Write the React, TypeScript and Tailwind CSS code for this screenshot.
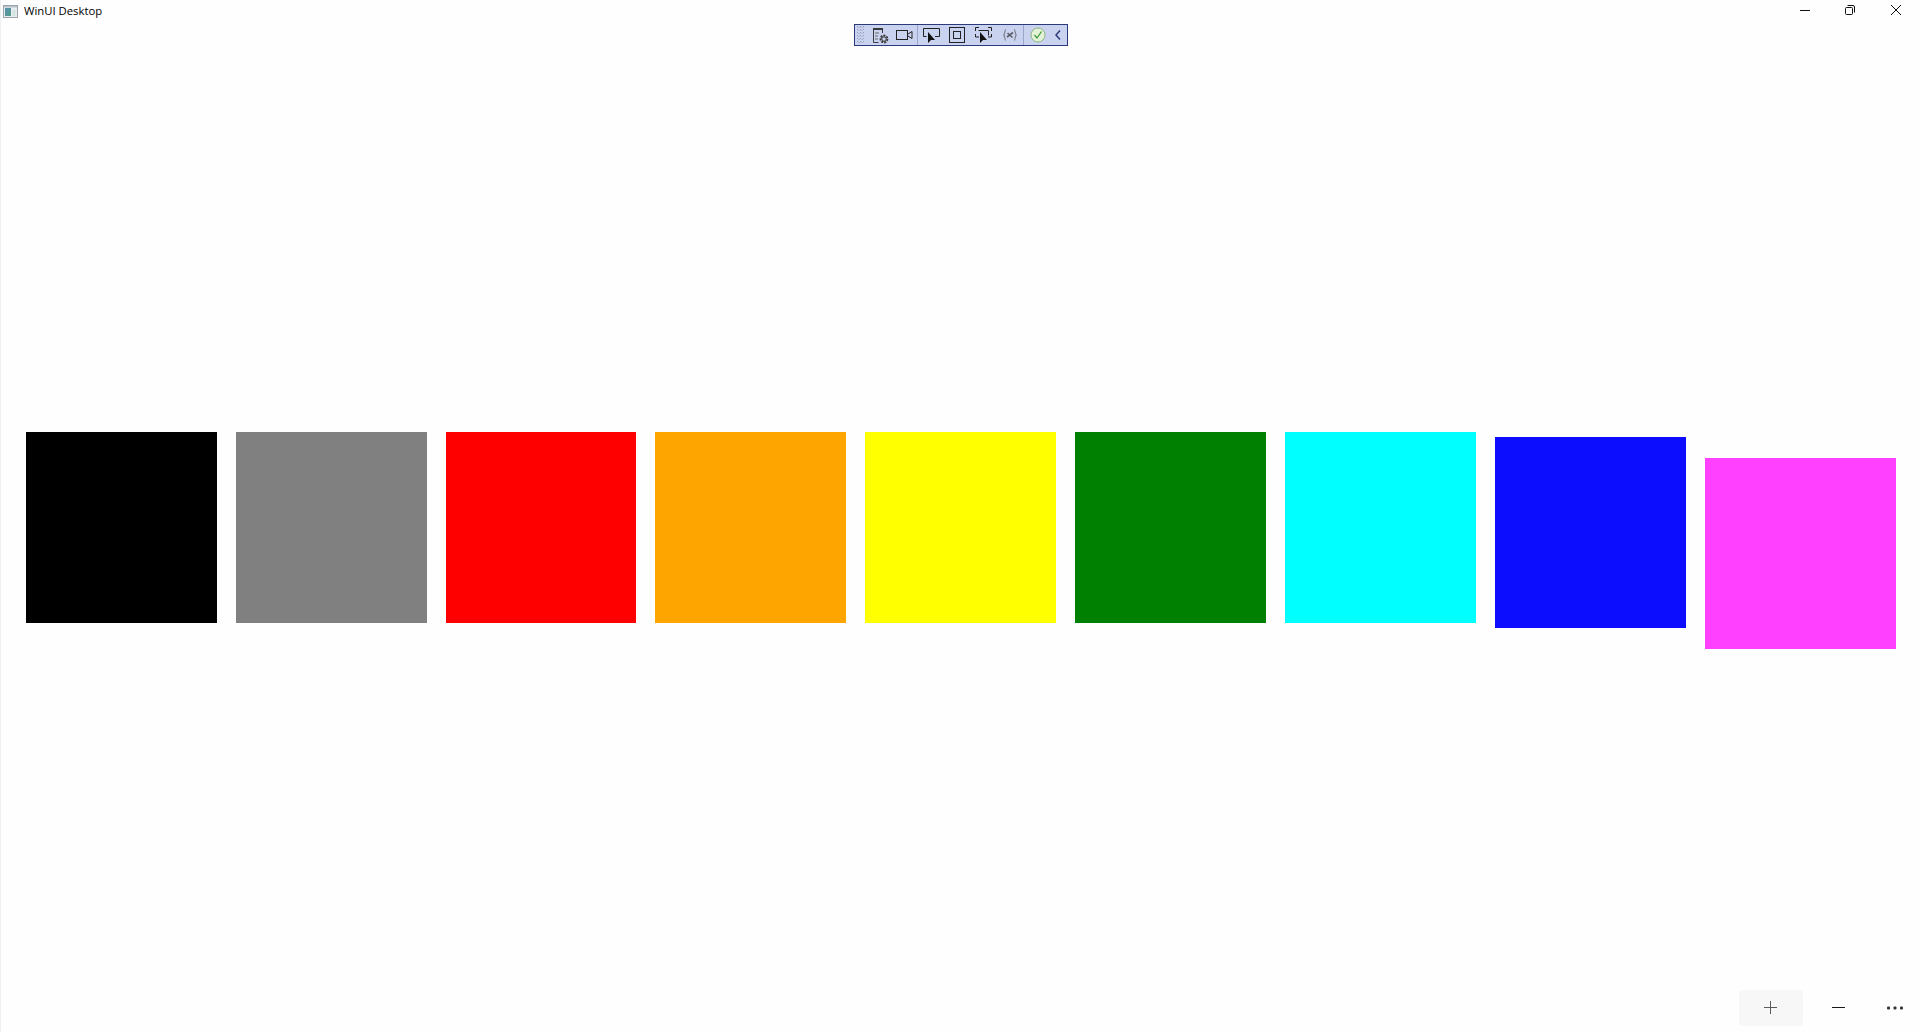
function TitleIcon() {
  return (
    <svg width="15" height="13" viewBox="0 0 15 13" className="ml-[2px] shrink-0">
      <defs>
        <linearGradient id="tg" x1="0" y1="0" x2="1" y2="1">
          <stop offset="0" stopColor="#5a8fb0" />
          <stop offset="1" stopColor="#4f9e86" />
        </linearGradient>
      </defs>
      <rect x="0.5" y="0.5" width="14" height="12" fill="#e8eef0" stroke="#9aa4ad" />
      <rect x="1" y="1" width="13" height="1.5" fill="#b9c3cc" />
      <rect x="2" y="3" width="6" height="8" fill="url(#tg)" />
      <rect x="9.5" y="5" width="3" height="6" fill="#cfe3dc" />
    </svg>
  );
}

function Toolbar() {
  return (
    <div className="absolute left-[853px] top-[24px] flex h-[22px] w-[214px] items-center border border-[#2c3a7c] bg-[#c9d2ee]">
      <svg width="7" height="18" viewBox="0 0 7 18" className="ml-[2px] shrink-0">
        {[1, 4, 7, 10, 13, 16].map((y) => (
          <g key={y} fill="#959db9">
            <rect x="0" y={y - 1} width="1" height="1" />
            <rect x="3" y={y - 1} width="1" height="1" />
            <rect x="6" y={y - 1} width="1" height="1" />
            <rect x="1.5" y={y} width="1" height="1" />
            <rect x="4.5" y={y} width="1" height="1" />
          </g>
        ))}
      </svg>
      <svg width="17" height="17" viewBox="0 0 17 17" className="ml-[8px] shrink-0">
        <rect x="1" y="1" width="10" height="2" fill="#3a3a3a" />
        <path d="M1.5 3v12.5h5M10.5 3v3" fill="none" stroke="#3a3a3a" />
        <path d="M3 6h4M3 9h3M3 12h3" stroke="#6a6a6a" />
        <circle cx="12" cy="12" r="3.4" fill="none" stroke="#3a3a3a" strokeWidth="2" strokeDasharray="2 1" />
        <circle cx="12" cy="12" r="2.2" fill="none" stroke="#3a3a3a" />
      </svg>
      <svg width="17" height="12" viewBox="0 0 17 12" className="ml-[7px] shrink-0">
        <rect x="0.5" y="1.5" width="11" height="9" fill="none" stroke="#222" />
        <path d="M12 5l4-2.5v7L12 7" fill="none" stroke="#222" />
      </svg>
      <div className="ml-[4px] h-[20px] w-px shrink-0 bg-[#9aa6cb]" />
      <svg width="17" height="17" viewBox="0 0 17 17" className="ml-[5px] shrink-0">
        <path d="M3.5 9.5H0.5V1.5H16.5V9.5H12" fill="none" stroke="#222" />
        <path d="M5 5l0 11 3-3 4 0z" fill="#111" />
      </svg>
      <svg width="16" height="16" viewBox="0 0 16 16" className="ml-[9px] shrink-0">
        <rect x="0.5" y="0.5" width="15" height="15" fill="none" stroke="#222" />
        <rect x="4.5" y="4.5" width="7" height="7" fill="none" stroke="#222" />
      </svg>
      <svg width="17" height="17" viewBox="0 0 17 17" className="ml-[10px] shrink-0">
        <path d="M0.5 4V0.5H4M13 0.5h3.5V4M16.5 7v3H13M4 10H0.5V7" fill="none" stroke="#222" />
        <path d="M3.5 3.5h10v5" fill="none" stroke="#222" />
        <path d="M5 5l0 11 3-3 4 0z" fill="#111" />
      </svg>
      <svg width="14" height="14" viewBox="0 0 14 14" className="ml-[11px] shrink-0">
        <path d="M3 1.5C1.5 1.5 2 6 0.8 7 2 8 1.5 12.5 3 12.5M11 1.5c1.5 0 1 4.5 2.2 5.5C12 8 12.5 12.5 11 12.5" fill="none" stroke="#7c7f8c" strokeWidth="1.2" />
        <path d="M4 9l6-4.500M4.500 5l5 4.500" fill="none" stroke="#5c5f6c" strokeWidth="1.6" />
      </svg>
      <div className="ml-[6px] h-[20px] w-px shrink-0 bg-[#9aa6cb]" />
      <svg width="16" height="16" viewBox="0 0 16 16" className="ml-[6px] shrink-0">
        <circle cx="8" cy="8" r="7" fill="#e4f3d8" stroke="#8cb583" />
        <path d="M4.5 8l2.5 3 4.500-6.500" fill="none" stroke="#3f9b39" strokeWidth="1.3" />
      </svg>
      <svg width="6" height="10" viewBox="0 0 6 10" className="ml-[9px] shrink-0">
        <path d="M5 0.5L1 5l4 4.500" fill="none" stroke="#2c3a7c" strokeWidth="1.5" />
      </svg>
    </div>
  );
}

function WindowButtons() {
  return (
    <div className="flex h-[20px] items-start">
      <svg width="10" height="10" viewBox="0 0 10 10" className="mt-[5px] shrink-0">
        <path d="M0 5.5H10" stroke="#111" />
      </svg>
      <svg width="10" height="10" viewBox="0 0 10 10" className="ml-[35px] mt-[5px] shrink-0">
        <rect x="0.5" y="2.5" width="7" height="7" rx="1" fill="none" stroke="#111" />
        <path d="M2.5 0.5H8a1.500 1.500 0 0 1 1.500 1.500V7.500" fill="none" stroke="#111" />
      </svg>
      <svg width="10" height="10" viewBox="0 0 10 10" className="ml-[36px] mr-[19px] mt-[5px] shrink-0">
        <path d="M0 0L10 10M10 0L0 10" stroke="#111" />
      </svg>
    </div>
  );
}

export default function App() {
  return (
    <div
      className="relative flex h-[1032px] w-[1920px] flex-col overflow-hidden border-l border-l-[#f0f0f0] bg-[#fefefe]"
      style={{ fontFamily: '"Open Sans", "Noto Sans", "Liberation Sans", sans-serif' }}
    >
      <header className="flex h-[22px] items-start justify-between">
        <div className="flex h-[22px] items-center gap-[6px]">
          <TitleIcon />
          <span className="text-[11.3px] leading-none text-black">WinUI Desktop</span>
        </div>
        <WindowButtons />
      </header>
      <Toolbar />

      <main className="flex flex-1 items-start gap-[19px] pl-[24.8px] pt-[410px]">
        <div className="h-[190.8px] w-[190.9px] shrink-0 bg-black" />
        <div className="h-[190.8px] w-[190.9px] shrink-0 bg-[#808080]" />
        <div className="h-[190.8px] w-[190.9px] shrink-0 bg-[#ff0000]" />
        <div className="h-[190.8px] w-[190.9px] shrink-0 bg-[#ffa500]" />
        <div className="h-[190.8px] w-[190.9px] shrink-0 bg-[#ffff00]" />
        <div className="h-[190.8px] w-[190.9px] shrink-0 bg-[#008000]" />
        <div className="mt-[0.4px] h-[190.8px] w-[190.9px] shrink-0 bg-[#00ffff]" />
        <div className="mt-[5.4px] h-[190.8px] w-[190.9px] shrink-0 bg-[#0c0cff]" />
        <div className="mt-[25.8px] h-[190.8px] w-[190.9px] shrink-0 bg-[#ff40ff]" />
      </main>

      <footer className="flex h-[42px] items-start justify-end pb-[6px] pr-[17px]">
        <button className="flex h-[36px] w-[64px] items-center justify-center rounded-[4px] bg-[#f7f7f7]">
          <svg width="13" height="13" viewBox="0 0 13 13" className="-ml-[2px] -mt-[1px]">
            <path d="M6.5 0V13M0 6.5H13" stroke="#5a5a5a" />
          </svg>
        </button>
        <button className="ml-[29px] flex h-[36px] w-[13px] items-center justify-center">
          <svg width="13" height="13" viewBox="0 0 13 13" className="-mt-[1px]">
            <path d="M0 6.5H13" stroke="#1a1a1a" />
          </svg>
        </button>
        <button className="ml-[42px] flex h-[36px] w-[16px] items-center justify-center">
          <svg width="16" height="4" viewBox="0 0 16 4" fill="#333">
            <rect x="0" y="0.5" width="3" height="3" rx="1" />
            <rect x="6.5" y="0.5" width="3" height="3" rx="1" />
            <rect x="13" y="0.5" width="3" height="3" rx="1" />
          </svg>
        </button>
      </footer>
    </div>
  );
}
